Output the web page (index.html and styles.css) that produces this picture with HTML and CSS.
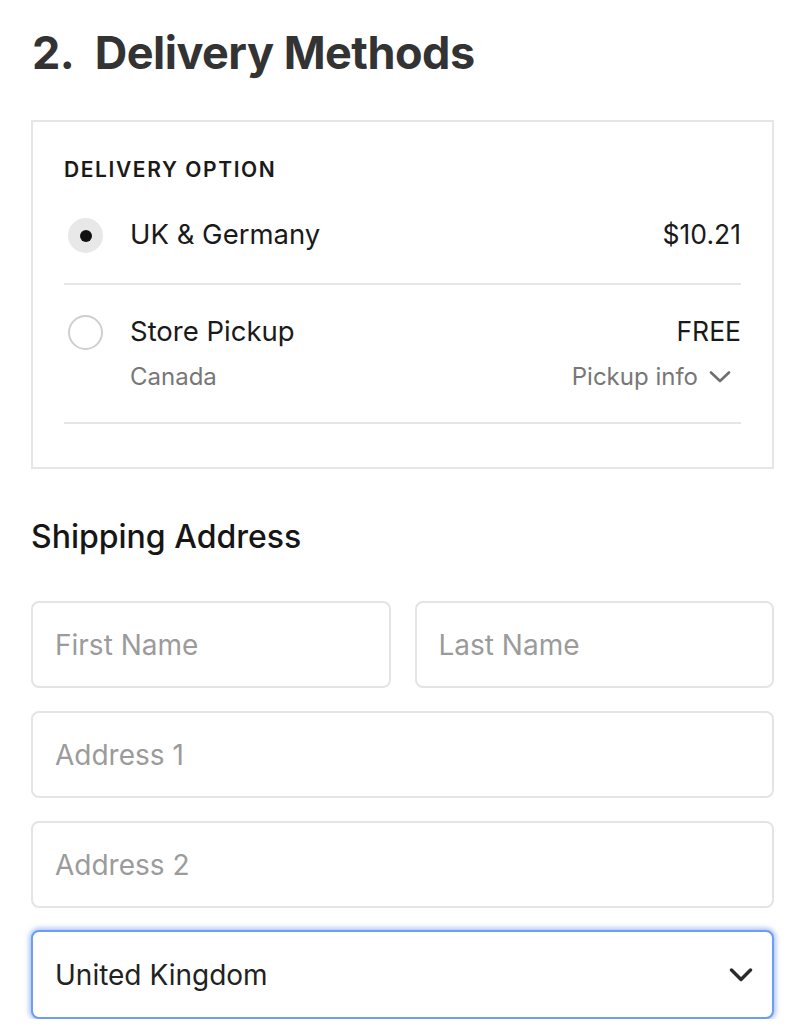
FILE: index.html
```html
<!DOCTYPE html>
<html lang="en">
<head>
  <meta charset="UTF-8" />
  <meta name="viewport" content="width=792, initial-scale=1.0" />
  <title>Checkout - Delivery Methods</title>
  <link rel="stylesheet" href="styles.css">
</head>
<body>
  <h1 class="step-title">2.&nbsp; Delivery Methods</h1>

  <section class="delivery-box">
    <h3 class="box-label">DELIVERY OPTION</h3>

    <div class="option">
      <span class="radio radio-checked"><span class="radio-dot"></span></span>
      <div class="option-main">
        <div class="option-title">UK &amp; Germany</div>
      </div>
      <div class="option-side">
        <div class="option-price">$10.21</div>
      </div>
    </div>

    <div class="option">
      <span class="radio"></span>
      <div class="option-main">
        <div class="option-title">Store Pickup</div>
        <div class="option-sub">Canada</div>
      </div>
      <div class="option-side">
        <div class="option-price">FREE</div>
        <div class="option-sub pickup-info">
          Pickup info
          <svg class="chevron-small" width="24" height="14" viewBox="0 0 24 14">
            <path d="M3 2.5 L12 11 L21 2.5" fill="none" stroke="#6f6f6f" stroke-width="2.6" stroke-linecap="round" stroke-linejoin="round"/>
          </svg>
        </div>
      </div>
    </div>
  </section>

  <h2 class="section-title">Shipping Address</h2>

  <form class="address-form">
    <div class="form-row two-col">
      <input class="field" type="text" placeholder="First Name">
      <input class="field" type="text" placeholder="Last Name">
    </div>
    <div class="form-row">
      <input class="field" type="text" placeholder="Address 1">
    </div>
    <div class="form-row">
      <input class="field" type="text" placeholder="Address 2">
    </div>
    <div class="form-row select-row">
      <div class="select-field">
        <select class="select-input">
          <option>United Kingdom</option>
          <option>Germany</option>
          <option>Canada</option>
        </select>
        <svg class="chevron" width="24" height="14" viewBox="0 0 24 14">
          <path d="M2.5 2 L12 11.5 L21.5 2" fill="none" stroke="#2b2b2b" stroke-width="3.4" stroke-linecap="round" stroke-linejoin="round"/>
        </svg>
      </div>
    </div>
  </form>
</body>
</html>
```

FILE: styles.css
```css
html, body {
  margin: 0;
  padding: 0;
  background: #ffffff;
  font-family: Inter, 'Noto Sans', Arial, sans-serif;
  color: #1a1a1a;
}

body {
  padding: 0 18px 0 31px;
  overflow: hidden;
}

.step-title {
  font-size: 45px;
  font-weight: 700;
  color: #333333;
  letter-spacing: -0.5px;
  line-height: 58px;
  margin: 24px 0 38px 1px;
}

.delivery-box {
  border: 2px solid #e6e6e6;
  padding: 35px 31px 43px 31px;
}

.box-label {
  margin: 0 0 4px 0;
  font-size: 21px;
  line-height: 26px;
  font-weight: 600;
  letter-spacing: 1.6px;
  color: #1a1a1a;
}

.option {
  display: flex;
  align-items: flex-start;
  padding: 29px 0 30px 0;
  border-bottom: 2px solid #e6e6e6;
}

.option + .option {
  padding-top: 28px;
  padding-bottom: 29px;
}

.radio {
  flex: none;
  width: 31px;
  height: 31px;
  margin: 2px 0 0 4px;
  border: 2px solid #cfcfcf;
  border-radius: 50%;
  display: flex;
  align-items: center;
  justify-content: center;
}

.radio-checked {
  border-color: #e8e8e8;
  background: #e8e8e8;
}

.radio-dot {
  width: 12px;
  height: 12px;
  border-radius: 50%;
  background: #111111;
}

.option-main {
  flex: 1;
  margin-left: 27px;
}

.option-title {
  font-size: 27.5px;
  line-height: 36px;
  color: #1a1a1a;
}

.option-price {
  font-size: 26.5px;
  line-height: 36px;
  color: #1a1a1a;
}

.option-sub {
  margin-top: 12px;
  font-size: 24px;
  line-height: 32px;
  color: #777777;
}

.option-side {
  display: flex;
  flex-direction: column;
  align-items: flex-end;
}

.pickup-info {
  display: flex;
  align-items: center;
  gap: 10px;
  margin-right: 9px;
}

.section-title {
  font-size: 32px;
  font-weight: 500;
  line-height: 40px;
  color: #161616;
  margin: 48px 0 44px 0;
}

.address-form {
  display: flex;
  flex-direction: column;
  gap: 23px;
}

.form-row {
  display: flex;
}

.select-row {
  margin-top: -1px;
}

.two-col {
  gap: 24px;
}

.field {
  flex: 1;
  min-width: 0;
  height: 87px;
  box-sizing: border-box;
  border: 2px solid #e4e4e4;
  border-radius: 8px;
  padding: 0 22px;
  font-family: inherit;
  font-size: 28px;
  color: #1a1a1a;
  outline: none;
  background: #ffffff;
}

.field::placeholder {
  color: #9b9b9b;
}

.select-field {
  flex: 1;
  display: flex;
  align-items: center;
  height: 89px;
  box-sizing: border-box;
  border: 2px solid #6d9cf2;
  border-radius: 8px;
  box-shadow: 0 0 5px 2px rgba(100, 150, 240, 0.55);
  padding: 0 19px 0 22px;
  background: #ffffff;
}

.select-input {
  flex: 1;
  appearance: none;
  -webkit-appearance: none;
  border: none;
  outline: none;
  background: transparent;
  font-family: inherit;
  font-size: 28px;
  color: #222222;
  padding: 0;
}

.chevron {
  flex: none;
}
```
